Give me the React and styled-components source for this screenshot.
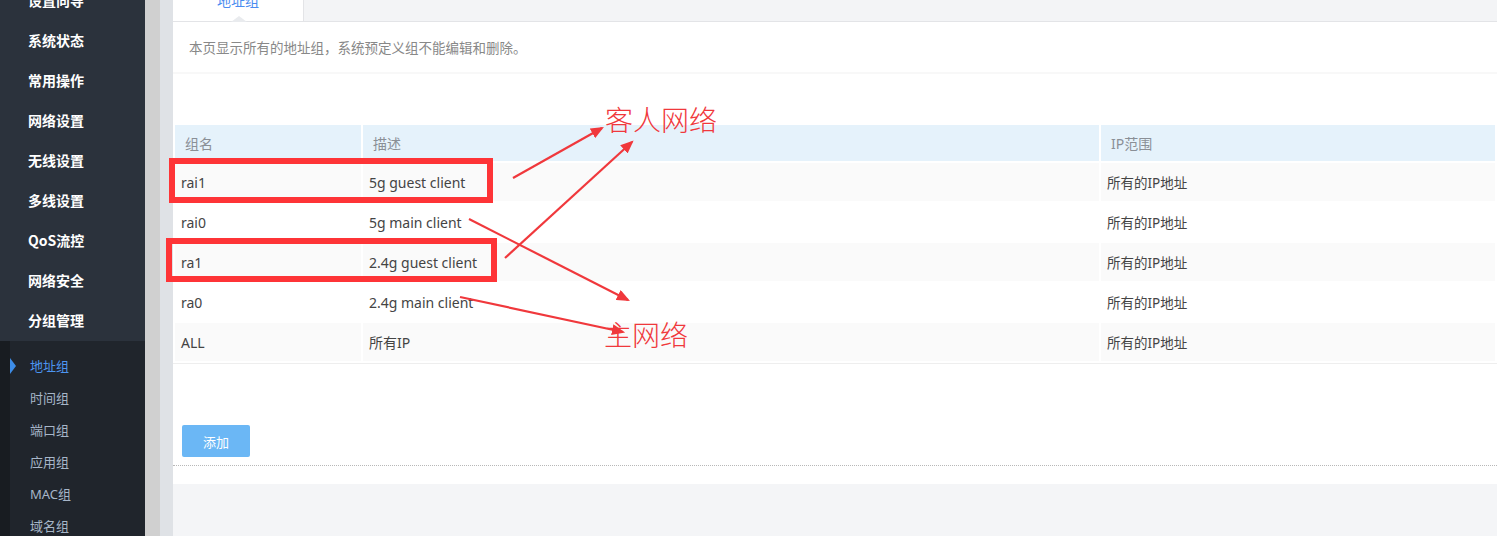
import React from "react";
import styled, { createGlobalStyle } from "styled-components";

const GlobalStyle = createGlobalStyle`
  html, body {
    margin: 0;
    padding: 0;
    overflow: hidden;
    background: #f4f5f7;
  }
  body {
    font-family: "Noto Sans", "Noto Sans CJK SC", sans-serif;
  }
`;

const Page = styled.div`
  position: relative;
  display: flex;
  width: 1497px;
  height: 536px;
  overflow: hidden;
`;

const Sidebar = styled.aside`
  width: 145px;
  flex-shrink: 0;
  background: #2b323c;
  display: flex;
  flex-direction: column;
`;

const MenuList = styled.ul`
  list-style: none;
  margin: -19px 0 0 0;
  padding: 0;
`;

const MenuItem = styled.li`
  height: 40px;
  line-height: 38px;
  padding-left: 28px;
  color: #fff;
  font-size: 14px;
  font-weight: 700;
  font-family: "Noto Sans CJK SC", sans-serif;
`;

const SubMenu = styled.ul`
  list-style: none;
  margin: 0;
  padding: 10px 0 0 0;
  flex: 1;
  background: #20252c;
  border-left: 10px solid #181c21;
`;

const SubItem = styled.li`
  position: relative;
  height: 32px;
  line-height: 30px;
  padding-left: 20px;
  font-size: 13px;
  font-family: "Noto Sans", "Noto Sans CJK SC", sans-serif;
  color: ${(p) => (p.active ? "#4d95f0" : "#a7b6c8")};
  &::before {
    content: "";
    display: ${(p) => (p.active ? "block" : "none")};
    position: absolute;
    left: 0;
    top: 7px;
    border-style: solid;
    border-width: 8px 0 8px 6px;
    border-color: transparent transparent transparent #3d8de8;
  }
`;

const Gutter = styled.div`
  width: 15px;
  flex-shrink: 0;
  background: #d0d0d0;
  border-right: 13px solid #dfe2e6;
`;

const Main = styled.main`
  flex: 1;
  display: flex;
  flex-direction: column;
  min-width: 0;
`;

const TabBar = styled.div`
  display: flex;
  height: 40px;
  margin-top: -19px;
  background: #f3f4f6;
  border-bottom: 1px solid #e3e4e7;
`;

const Tab = styled.div`
  position: relative;
  width: 130px;
  background: #fff;
  border-right: 1px solid #e3e4e7;
  text-align: center;
  line-height: 38px;
  font-size: 14px;
  color: #4a8cf0;
  font-family: "Noto Sans CJK SC", sans-serif;
  &::after {
    content: "";
    position: absolute;
    left: 58px;
    bottom: -1px;
    border-style: solid;
    border-width: 0 8px 6px 8px;
    border-color: transparent transparent #e9ebee transparent;
  }
`;

const Panel = styled.section`
  background: #fff;
  height: 462px;
  display: flex;
  flex-direction: column;
`;

const Intro = styled.p`
  margin: 0;
  height: 50px;
  line-height: 50px;
  padding-left: 16px;
  font-size: 13.5px;
  color: #888;
  border-bottom: 2px solid #f8f8f8;
  font-family: "Noto Sans CJK SC", sans-serif;
`;

const Table = styled.table`
  margin-top: 49px;
  width: 100%;
  border-collapse: separate;
  border-spacing: 2px;
  margin-left: 0;
  font-size: 14px;
  color: #444;
  border-bottom: 1px solid #eee;
`;

const Th = styled.th`
  height: 36px;
  padding: 0 0 0 10px;
  text-align: left;
  font-weight: 400;
  font-size: 14px;
  color: #8a8f96;
  background: #e5f2fb;
  width: ${(p) => p.w || "auto"};
`;

const Tr = styled.tr`
  background: ${(p) => (p.odd ? "#fafafa" : "#fff")};
`;

const Td = styled.td`
  height: 38px;
  padding: 0 0 0 6px;
  font-size: ${(p) => (p.small ? "13.5px" : "14px")};
`;

const Actions = styled.div`
  padding: 61px 0 8px 9px;
  border-bottom: 1px dotted #b8b8b8;
`;

const AddButton = styled.button`
  width: 68px;
  height: 32px;
  border: none;
  border-radius: 2px;
  background: #6bb7f5;
  color: #fff;
  font-size: 13px;
  font-family: "Noto Sans CJK SC", sans-serif;
`;

const Overlay = styled.svg`
  position: absolute;
  left: 0;
  top: 0;
  pointer-events: none;
`;

const Note = styled.text`
  font-family: "Noto Sans CJK SC", serif;
  font-weight: 300;
  font-size: 28px;
  fill: #f0383c;
`;

const menus = ["设置向导", "系统状态", "常用操作", "网络设置", "无线设置", "多线设置", "QoS流控", "网络安全", "分组管理"];
const subs = ["地址组", "时间组", "端口组", "应用组", "MAC组", "域名组"];
const rows = [
  ["rai1", "5g guest client"],
  ["rai0", "5g main client"],
  ["ra1", "2.4g guest client"],
  ["ra0", "2.4g main client"],
  ["ALL", "所有IP"],
];

const arrows = [
  [513, 178, 602, 128],
  [505, 258, 632, 142],
  [469, 219, 628, 300],
  [460, 297, 623, 332],
];

export default function App() {
  return (
    <>
      <GlobalStyle />
      <Page>
        <Sidebar>
          <MenuList>
            {menus.map((m) => (
              <MenuItem key={m}>{m}</MenuItem>
            ))}
          </MenuList>
          <SubMenu>
            {subs.map((s, i) => (
              <SubItem key={s} active={i === 0}>
                {s}
              </SubItem>
            ))}
          </SubMenu>
        </Sidebar>
        <Gutter />
        <Main>
          <TabBar>
            <Tab>地址组</Tab>
          </TabBar>
          <Panel>
            <Intro>本页显示所有的地址组，系统预定义组不能编辑和删除。</Intro>
            <Table>
              <thead>
                <tr>
                  <Th w="176px">组名</Th>
                  <Th w="726px">描述</Th>
                  <Th>IP范围</Th>
                </tr>
              </thead>
              <tbody>
                {rows.map((r, i) => (
                  <Tr key={r[0]} odd={i % 2 === 0}>
                    <Td>{r[0]}</Td>
                    <Td>{r[1]}</Td>
                    <Td small>所有的IP地址</Td>
                  </Tr>
                ))}
              </tbody>
            </Table>
            <Actions>
              <AddButton>添加</AddButton>
            </Actions>
          </Panel>
        </Main>
        <Overlay width="1497" height="536">
          <defs>
            <marker id="head" markerWidth="6" markerHeight="5" refX="5" refY="2.5" orient="auto" markerUnits="strokeWidth">
              <path d="M0,0 L6,2.5 L0,5 Z" fill="#f0383c" />
            </marker>
          </defs>
          <rect x="172" y="161" width="318" height="39" fill="none" stroke="#fe3437" strokeWidth="6" />
          <rect x="169" y="241" width="325" height="38" fill="none" stroke="#fe3437" strokeWidth="6" />
          {arrows.map(([x1, y1, x2, y2], i) => (
            <line key={i} x1={x1} y1={y1} x2={x2} y2={y2} stroke="#f0383c" strokeWidth="2.2" markerEnd="url(#head)" />
          ))}
          <Note x="605" y="131">客人网络</Note>
          <Note x="604" y="346">主网络</Note>
        </Overlay>
      </Page>
    </>
  );
}
